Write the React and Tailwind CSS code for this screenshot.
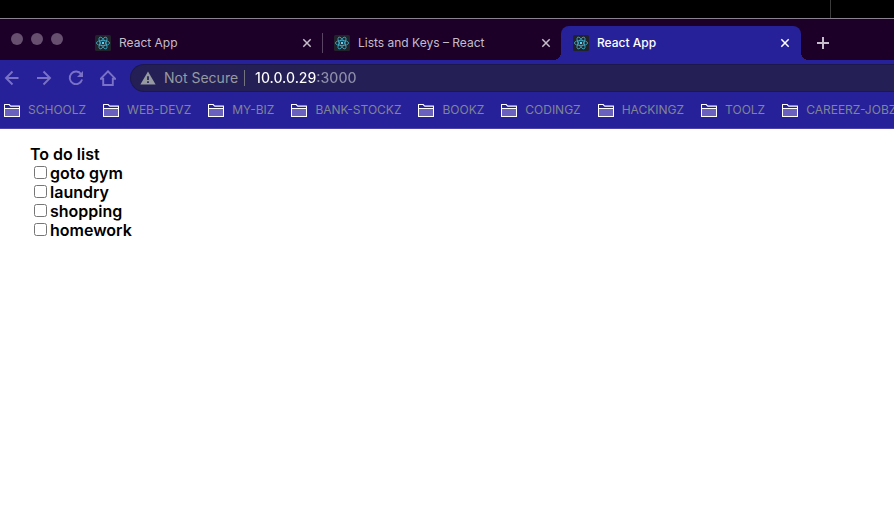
import React from "react";

const bookmarks = [
  "SCHOOLZ",
  "WEB-DEVZ",
  "MY-BIZ",
  "BANK-STOCKZ",
  "BOOKZ",
  "CODINGZ",
  "HACKINGZ",
  "TOOLZ",
  "CAREERZ-JOBZ",
];

const todos = ["goto gym", "laundry", "shopping", "homework"];

function ReactLogo() {
  return (
    <svg viewBox="0 0 16 16" className="size-4 shrink-0" aria-hidden="true">
      <rect width="16" height="16" rx="1.5" fill="#20232a" />
      <g fill="none" stroke="#3fa9c4" strokeWidth="0.85">
        <ellipse cx="8" cy="8" rx="6.6" ry="2.6" />
        <ellipse cx="8" cy="8" rx="6.6" ry="2.6" transform="rotate(60 8 8)" />
        <ellipse cx="8" cy="8" rx="6.6" ry="2.6" transform="rotate(120 8 8)" />
      </g>
      <circle cx="8" cy="8" r="1.2" fill="#61dafb" />
    </svg>
  );
}

function Tab({ title, active }) {
  const tone = active ? "bg-[#262199] text-white font-medium rounded-t-lg" : "text-[#c6bdca]";
  return (
    <div className={`relative flex h-full w-60 shrink-0 items-center pl-3 pr-2.5 ${tone}`}>
      {active && (
        <>
          <span className="absolute bottom-0 -left-2 size-2 bg-[radial-gradient(circle_at_0_0,#1c0027_8px,#262199_8px)]" />
          <span className="absolute bottom-0 -right-2 size-2 bg-[radial-gradient(circle_at_100%_0,#1c0027_8px,#262199_8px)]" />
        </>
      )}
      <a href="#" className="flex flex-1 items-center gap-2 text-xs">
        <ReactLogo />
        {title}
      </a>
      <button aria-label={`Close ${title}`} className="flex size-3 items-center justify-center">
        <svg viewBox="0 0 12 12" className="size-3" stroke="currentColor" strokeWidth="1.5">
          <path d="M2.3 2.3l7.4 7.4M9.7 2.3L2.3 9.7" />
        </svg>
      </button>
    </div>
  );
}

function NavButton({ label, children }) {
  return (
    <button aria-label={label} className="flex size-6 items-center justify-center text-[#7a72c6]">
      <svg viewBox="0 0 16 16" className="size-4" fill="none" stroke="currentColor" strokeWidth="1.9">
        {children}
      </svg>
    </button>
  );
}

function Folder() {
  return (
    <svg viewBox="0 0 16 14" className="h-3.5 w-4 shrink-0" aria-hidden="true">
      <path d="M.5 13.5V1.5h4.6l1.6 1.6h8.8v10.4z" fill="#262199" stroke="#fff" strokeWidth="1.1" strokeLinejoin="round" />
      <path d="M1 5h14v8H1z" fill="#6a60bd" />
      <path d="M1 5.5h14" stroke="#fff" strokeWidth="1" />
    </svg>
  );
}

export default function App() {
  return (
    <div className="min-h-screen overflow-hidden bg-white font-['Inter','Liberation_Sans',sans-serif]">
      <div className="flex h-[18px] justify-end bg-black pr-[63px]">
        <span className="w-px bg-[#3c3c3c]" />
      </div>

      <header>
        <div className="flex h-[42px] border-t border-[#8b8190] bg-[#1c0027] pt-[7px]">
          <div className="flex w-[83px] shrink-0 gap-2 pt-[7px] pl-[11px]">
            <span className="size-3 rounded-full bg-[#664f6f]" />
            <span className="size-3 rounded-full bg-[#664f6f]" />
            <span className="size-3 rounded-full bg-[#664f6f]" />
          </div>
          <nav className="flex">
            <Tab title="React App" />
            <span className="-ml-px mt-[7px] h-5 w-px bg-[#5a4463]" />
            <div className="-ml-px flex">
              <Tab title="Lists and Keys – React" />
            </div>
            <div className="-ml-px flex">
              <Tab title="React App" active />
            </div>
          </nav>
          <button aria-label="New tab" className="ml-2.5 flex w-6 items-center justify-center text-[#c6bdca]">
            <svg viewBox="0 0 12 12" className="size-3" stroke="currentColor" strokeWidth="2">
              <path d="M6 0v12M0 6h12" />
            </svg>
          </button>
        </div>

        <div className="flex h-9 items-center bg-[#262199]">
          <div className="flex w-[130px] shrink-0 gap-2">
            <NavButton label="Back">
              <path d="M14.5 8H2.5M8.5 1.5L2 8l6.5 6.5" />
            </NavButton>
            <NavButton label="Forward">
              <path d="M1 8h12.5M7.5 1.5L14 8l-6.5 6.5" />
            </NavButton>
            <NavButton label="Reload">
              <path d="M13.2 4.2A6.3 6.3 0 1 0 14.1 9.6" />
              <path d="M15 1v6H9z" fill="currentColor" stroke="none" />
            </NavButton>
            <NavButton label="Home">
              <path d="M.8 8.7L8 1.3l7.2 7.4H12.8V15H3.2V8.7z" />
            </NavButton>
          </div>
          <div className="flex h-7 flex-1 items-center rounded-l-full border border-r-0 border-[#1c184c] bg-[#242056] pl-[9px] text-sm">
            <button className="flex items-center gap-2 text-[#969aa0]">
              <svg viewBox="0 0 16 14" className="h-3.5 w-4" aria-hidden="true">
                <path d="M8 .5L15.6 13.5H.4z" fill="currentColor" />
                <path d="M8 5.2v3.9M8 10.2v1.7" stroke="#242056" strokeWidth="1.7" />
              </svg>
              Not Secure
            </button>
            <span className="mr-2.5 ml-1.5 h-4 w-px bg-[#73747f]" />
            <input
              aria-label="Address"
              defaultValue="10.0.0.29:3000"
              className="min-w-0 flex-1 bg-[linear-gradient(to_right,#ffffff_62px,#908fa9_62px)] bg-clip-text font-medium text-transparent outline-none"
            />
          </div>
        </div>

        <nav className="flex h-[33px] gap-[17px] overflow-hidden border-b border-[#4b43aa] bg-[#262199] pb-1 pl-1">
          {bookmarks.map((name) => (
            <a key={name} href="#" className="flex shrink-0 items-center gap-2 text-xs whitespace-nowrap text-[#818593]">
              <Folder />
              {name}
            </a>
          ))}
        </nav>
      </header>

      <main className="px-[30px] pt-4 text-base leading-[19px] font-semibold text-black">
        <h1>To do list</h1>
        <ul>
          {todos.map((item) => (
            <li key={item}>
              <label className="flex items-center gap-[3px] pl-1">
                <input type="checkbox" className="mb-0.5 size-[13px]" />
                {item}
              </label>
            </li>
          ))}
        </ul>
      </main>
    </div>
  );
}
